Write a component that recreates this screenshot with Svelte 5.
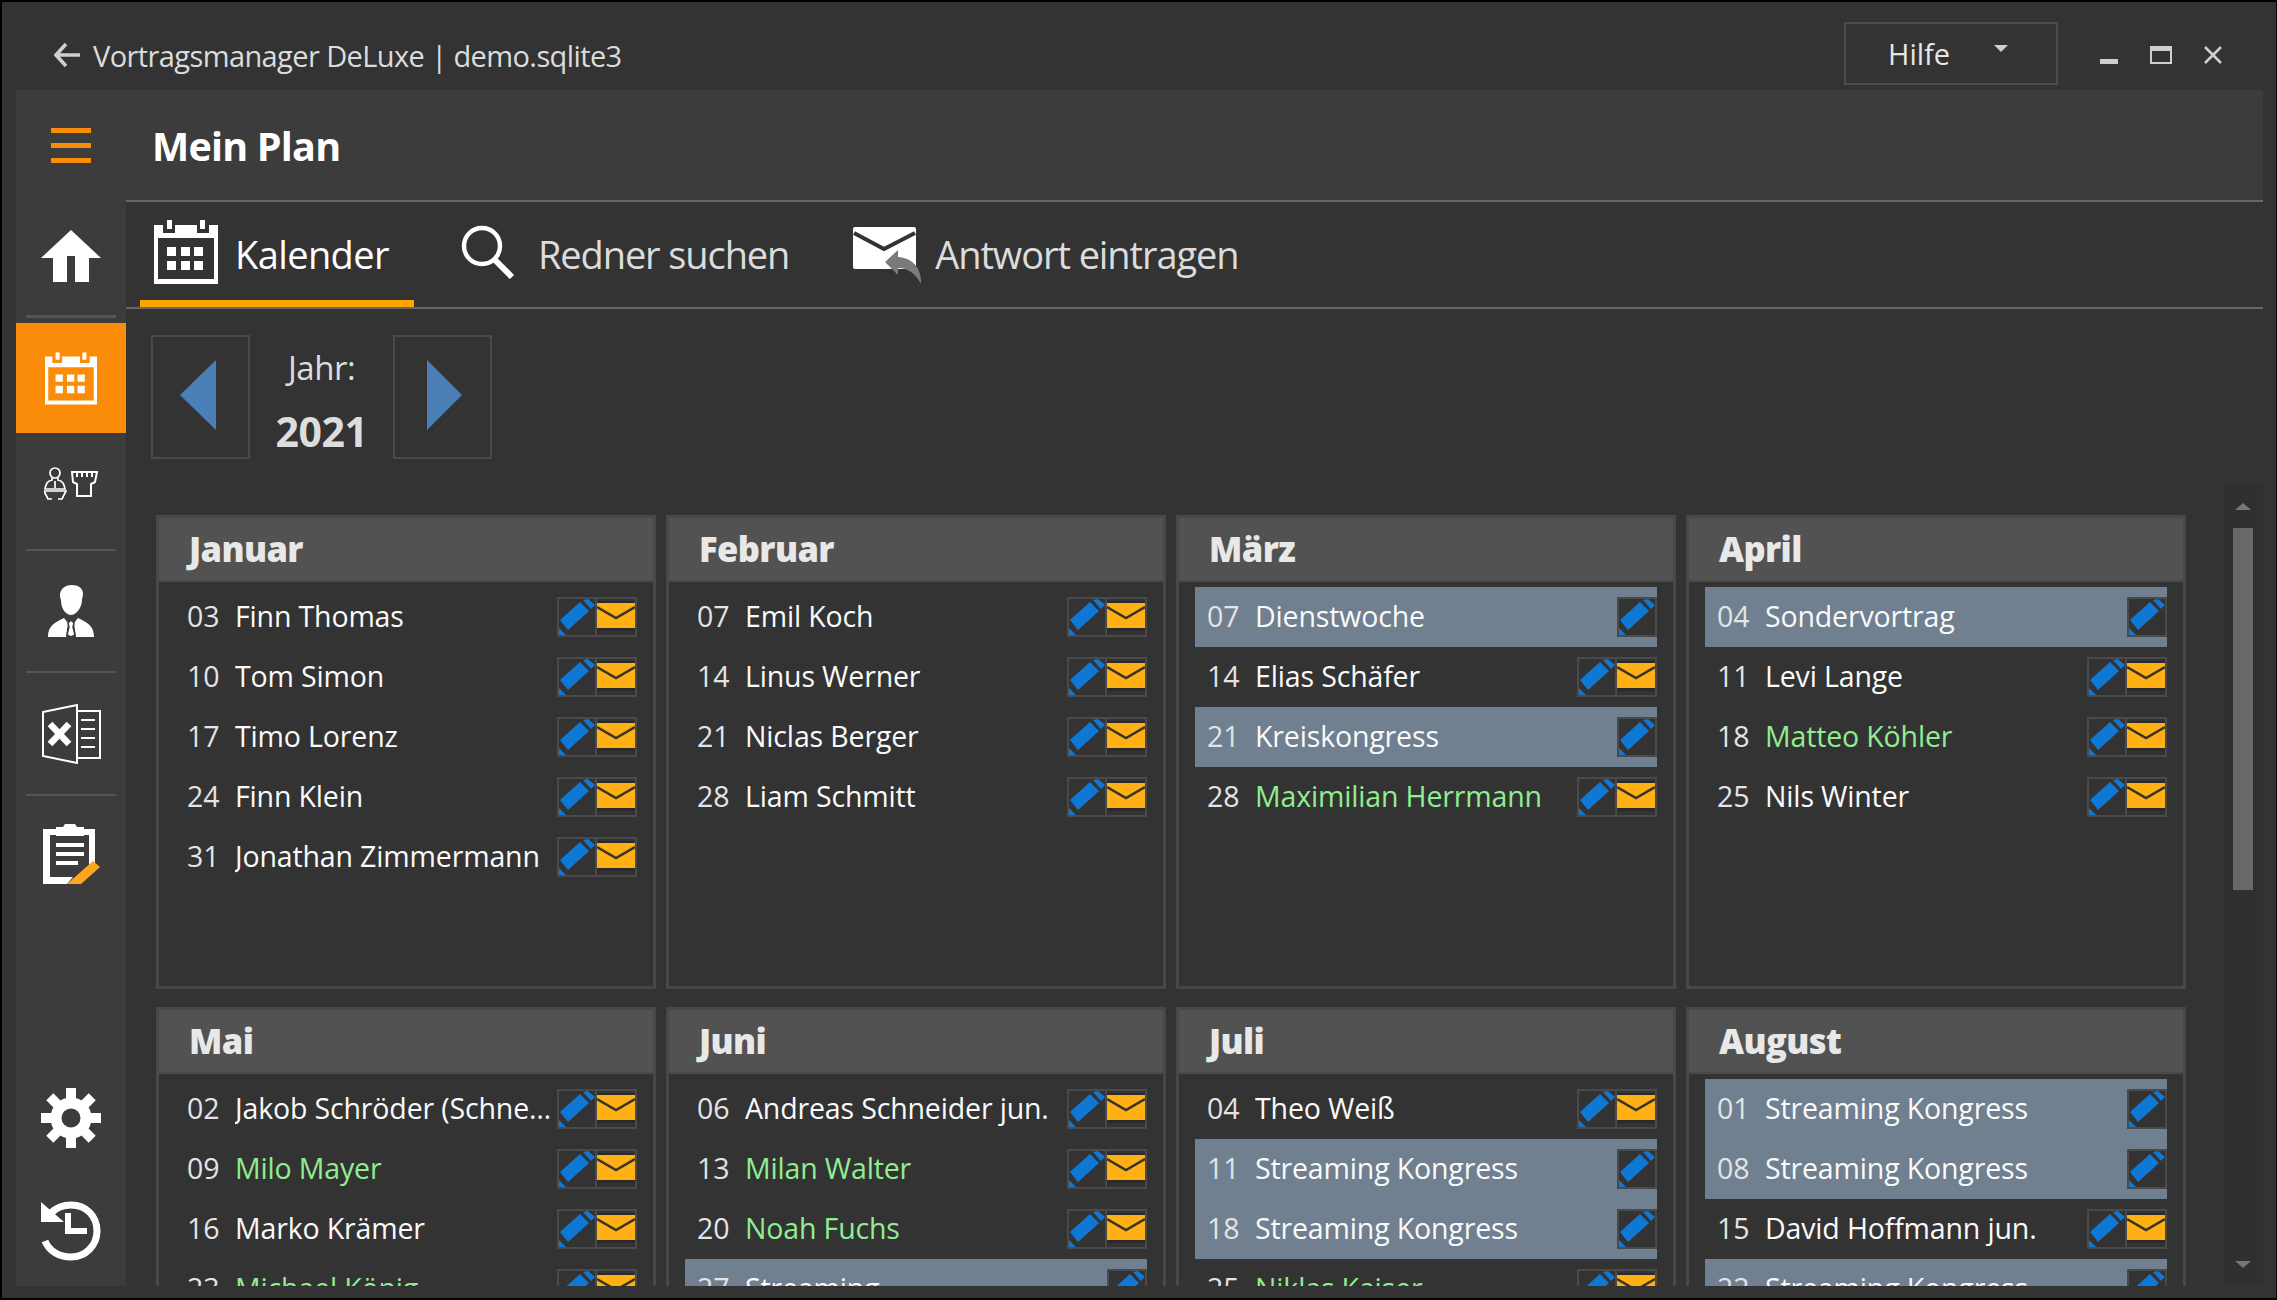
<script>
  const months = [
    { name: "Januar", rows: [
      { d: "03", t: "Finn Thomas" }, { d: "10", t: "Tom Simon" }, { d: "17", t: "Timo Lorenz" },
      { d: "24", t: "Finn Klein" }, { d: "31", t: "Jonathan Zimmermann" } ] },
    { name: "Februar", rows: [
      { d: "07", t: "Emil Koch" }, { d: "14", t: "Linus Werner" }, { d: "21", t: "Niclas Berger" },
      { d: "28", t: "Liam Schmitt" } ] },
    { name: "März", rows: [
      { d: "07", t: "Dienstwoche", event: true }, { d: "14", t: "Elias Schäfer" },
      { d: "21", t: "Kreiskongress", event: true }, { d: "28", t: "Maximilian Herrmann", guest: true } ] },
    { name: "April", rows: [
      { d: "04", t: "Sondervortrag", event: true }, { d: "11", t: "Levi Lange" },
      { d: "18", t: "Matteo Köhler", guest: true }, { d: "25", t: "Nils Winter" } ] },
    { name: "Mai", rows: [
      { d: "02", t: "Jakob Schröder (Schneider)" }, { d: "09", t: "Milo Mayer", guest: true },
      { d: "16", t: "Marko Krämer" }, { d: "23", t: "Michael König", guest: true } ] },
    { name: "Juni", rows: [
      { d: "06", t: "Andreas Schneider jun." }, { d: "13", t: "Milan Walter", guest: true },
      { d: "20", t: "Noah Fuchs", guest: true }, { d: "27", t: "Streaming", event: true } ] },
    { name: "Juli", rows: [
      { d: "04", t: "Theo Weiß" }, { d: "11", t: "Streaming Kongress", event: true },
      { d: "18", t: "Streaming Kongress", event: true }, { d: "25", t: "Niklas Kaiser", guest: true } ] },
    { name: "August", rows: [
      { d: "01", t: "Streaming Kongress", event: true }, { d: "08", t: "Streaming Kongress", event: true },
      { d: "15", t: "David Hoffmann jun." }, { d: "22", t: "Streaming Kongress", event: true } ] }
  ];

  const gearTeeth = [0, 45, 90, 135, 180, 225, 270, 315];
</script>

{#snippet calendar()}
  <path
    fill="currentColor"
    fill-rule="evenodd"
    d="M0 5H64V64H0ZM4 18H60V59H4ZM9 5H21V13H9ZM43 5H55V13H43ZM13 0H18V9H13ZM46 0H51V9H46ZM13 27H22V36H13ZM27 27H36V36H27ZM40 27H49V36H40ZM13 41H22V50H13ZM27 41H36V50H27ZM40 41H49V50H40Z"
  />
{/snippet}

{#snippet pencil()}
  <svg class="pen" viewBox="0 0 36 36">
    <path fill="#0f78d4" d="M1 21 21 3 30 12 9 31ZM24 1 29 0 36 6 32 10ZM0 29 7 36H0Z" />
  </svg>
{/snippet}

{#snippet mail()}
  <svg class="mail" viewBox="0 0 38 36">
    <rect x="0" y="2" width="38" height="2" fill="#2a2a2a" />
    <rect x="0" y="4" width="38" height="25" fill="#ffb014" />
    <rect x="0" y="29" width="38" height="3" fill="#2a2a2a" />
    <path d="M0 8 19 19 38 8" fill="none" stroke="#3a3226" stroke-width="2.500" />
  </svg>
{/snippet}

<div class="window">
  <header class="titlebar">
    <svg class="back" viewBox="0 0 26 26">
      <path d="M12 2 2 13 12 24M2 13H26" fill="none" stroke="#d0d0d0" stroke-width="3.500" />
    </svg>
    <span class="apptitle">Vortragsmanager DeLuxe | demo.sqlite3</span>
    <button class="help">
      <span>Hilfe</span>
      <i class="caret"></i>
    </button>
    <div class="winbtns">
      <span class="min"></span>
      <span class="max"></span>
      <svg class="close" viewBox="0 0 18 18">
        <path d="M1 1 17 17M17 1 1 17" stroke="#cfcfcf" stroke-width="2.500" />
      </svg>
    </div>
  </header>

  <div class="shell">
    <nav class="sidebar">
      <div class="burger"><span></span><span></span><span></span></div>

      <div class="item home">
        <svg class="i-home" viewBox="0 0 60 52">
          <path fill="#fff" d="M30 0 60 28H48V52H34V26H26V52H12V28H0Z" />
        </svg>
      </div>
      <div class="rule thick"></div>
      <div class="item active">
        <svg class="i-cal" viewBox="0 0 64 64">{@render calendar()}</svg>
      </div>
      <div class="item users">
        <svg class="i-users" viewBox="0 0 55 34" fill="none" stroke="#fff" stroke-width="1.700">
          <circle cx="11" cy="7" r="5" />
          <path d="M8 12V14C3 15 2 18 1 23H21C20 18 19 15 14 14V12M11 15V22" />
          <path d="M0 25H22L18 33H14M0 25 4 33H8" />
          <path d="M28 6H53L51 16 47 18V30H33V18L29 16ZM33 6V11M38 6V11M43 6V11M48 6V11" stroke-width="2" />
        </svg>
      </div>
      <div class="rule"></div>
      <div class="item person">
        <svg class="i-person" viewBox="0 0 46 52">
          <path fill="#fff" d="M12 9C13 3 18 0 24 0 30 0 35 3 35 9 35 11 34 13 34 15 34 19 32 24 29 27 27 29 25 30 23 30 21 30 19 29 17 27 14 24 13 19 13 15 12 13 12 11 12 9Z" />
          <path fill="#fff" d="M0 52C0 41 6 38 16 33L20 38 18 52H28L26 38 30 33C40 38 46 41 46 52Z" />
          <path d="M20 38 23 35 26 38 25 42 27 50 23 52 19 50 21 42Z" fill="#fff" stroke="#3c3c3c" stroke-width="1.500" />
        </svg>
      </div>
      <div class="rule"></div>
      <div class="item excel">
        <svg class="i-excel" viewBox="0 0 59 60">
          <path d="M1 8 35 1V59L1 52Z" fill="none" stroke="#fff" stroke-width="2" />
          <path d="M35 7H58V54H35M39 16H53M39 25H53M39 34H53M39 43H53" fill="none" stroke="#fff" stroke-width="2" />
          <path d="M8 20 27 40M27 20 8 40" stroke="#fff" stroke-width="6.500" />
        </svg>
      </div>
      <div class="rule"></div>
      <div class="item clip">
        <svg class="i-clip" viewBox="0 0 57 60">
          <path fill="#fff" d="M0 5H52V42H46V11H7V53H30L24 60H0Z" />
          <path fill="#fff" d="M13 3H20L22 0H32L34 3H41V12H13Z" />
          <path d="M13 21H41M13 30H41M13 39H35" stroke="#fff" stroke-width="4" />
          <path fill="#ffa51e" d="M24 60 50 37 57 43 38 60Z" />
        </svg>
      </div>
      <div class="spacer"></div>
      <div class="item gear">
        <svg class="i-gear" viewBox="0 0 60 62">
          {#each gearTeeth as angle}
            <rect x="25" y="1" width="10" height="14" fill="#fff" transform="rotate({angle} 30 31)" />
          {/each}
          <circle cx="30" cy="31" r="15" fill="none" stroke="#fff" stroke-width="11" />
        </svg>
      </div>
      <div class="item history">
        <svg class="i-hist" viewBox="0 0 60 61">
          <path d="M4 41C8 51 18 57 30 57 45 57 56 45 56 31 56 16 45 5 30 5 22 5 15 8 10 13" fill="none" stroke="#fff" stroke-width="7" />
          <path fill="#fff" d="M0 2 23 22H0Z" />
          <path d="M27 13V31H46" fill="none" stroke="#fff" stroke-width="6" />
        </svg>
      </div>
    </nav>

    <main class="main">
      <div class="pagehead"><h1>Mein Plan</h1></div>

      <div class="tabs">
        <div class="tab current">
          <svg class="t-cal" viewBox="0 0 64 64">{@render calendar()}</svg>
          <span>Kalender</span>
        </div>
        <div class="tab">
          <svg class="t-search" viewBox="0 0 54 54">
            <circle cx="21" cy="21" r="18" fill="none" stroke="#fff" stroke-width="4.500" />
            <path d="M33 34 51 52" stroke="#fff" stroke-width="6" />
          </svg>
          <span>Redner suchen</span>
        </div>
        <div class="tab">
          <svg class="t-mail" viewBox="0 0 70 58">
            <rect width="63" height="42" rx="2" fill="#fff" />
            <path d="M1 6 31 22 62 6" fill="none" stroke="#333" stroke-width="4" />
            <path fill="#7a7a7a" d="M32 35 45 23V30C60 31 69 42 68 57 63 47 55 41 45 41V48Z" />
          </svg>
          <span>Antwort eintragen</span>
        </div>
      </div>

      <div class="yearnav">
        <button class="arrow" aria-label="Vorheriges Jahr"><i class="tri left"></i></button>
        <div class="year">
          <span class="lbl">Jahr:</span>
          <strong>2021</strong>
        </div>
        <button class="arrow" aria-label="Nächstes Jahr"><i class="tri right"></i></button>
      </div>

      <div class="content">
        <div class="months">
          {#each months as m}
            <section class="card">
              <h2>{m.name}</h2>
              <div class="rows">
                {#each m.rows as r}
                  <div class="row" class:event={r.event} class:guest={r.guest}>
                    <span class="day">{r.d}</span>
                    <span class="who">{r.t}</span>
                    <div class="acts">
                      <span class="ico">{@render pencil()}</span>
                      {#if !r.event}
                        <span class="ico second">{@render mail()}</span>
                      {/if}
                    </div>
                  </div>
                {/each}
              </div>
            </section>
          {/each}
        </div>
        <div class="scrollbar">
          <i class="up"></i>
          <div class="thumb"></div>
          <i class="down"></i>
        </div>
      </div>
    </main>
  </div>
</div>

<style>
  :global(body) {
    margin: 0;
    background: #000;
  }

  .window {
    box-sizing: border-box;
    width: 2274px;
    height: 1296px;
    margin-top: 2px;
    margin-left: 2px;
    background: #333;
    display: flex;
    flex-direction: column;
    font-family: "Open Sans", "Noto Sans", sans-serif;
    color: #f2f2f2;
    overflow: hidden;
  }

  /* title bar */
  .titlebar {
    height: 88px;
    display: flex;
    align-items: center;
    flex: none;
    padding-left: 52px;
  }
  .back {
    width: 26px;
    height: 26px;
    margin-right: 13px;
    margin-top: 18px;
  }
  .apptitle {
    font-size: 29px;
    color: #dcdcdc;
    letter-spacing: -0.6px;
    margin-top: 18px;
  }
  .help {
    margin-left: auto;
    margin-top: 14px;
    width: 214px;
    height: 63px;
    box-sizing: border-box;
    border: 2px solid #4c4c4c;
    background: transparent;
    color: #e6e6e6;
    font: inherit;
    font-size: 29px;
    display: flex;
    align-items: center;
    padding: 0 0 0 42px;
  }
  .caret {
    margin-left: 44px;
    margin-top: -10px;
    border-left: 7px solid transparent;
    border-right: 7px solid transparent;
    border-top: 7px solid #cfcfcf;
  }
  .winbtns {
    display: flex;
    align-items: center;
    gap: 32px;
    margin-left: 42px;
    margin-right: 54px;
    margin-top: 17px;
  }
  .min {
    width: 18px;
    height: 5px;
    background: #cfcfcf;
    margin-top: 14px;
  }
  .max {
    box-sizing: border-box;
    width: 22px;
    height: 18px;
    border: 2px solid #cfcfcf;
    border-top-width: 5px;
  }
  .close {
    width: 18px;
    height: 18px;
  }

  .shell {
    flex: none;
    height: 1196px;
    margin: 0 13px 0 14px;
    display: flex;
    overflow: hidden;
  }

  /* left rail */
  .sidebar {
    width: 110px;
    flex: none;
    background: #3c3c3c;
    display: flex;
    flex-direction: column;
  }
  .burger {
    height: 110px;
    flex: none;
    display: flex;
    flex-direction: column;
    align-items: center;
    gap: 10px;
    padding-top: 38px;
    box-sizing: border-box;
  }
  .burger span {
    width: 40px;
    height: 5px;
    background: #fb8c09;
  }
  .item {
    flex: none;
    display: flex;
    align-items: center;
    justify-content: center;
  }
  .home { height: 111px; margin-bottom: 4px; }
  .active { height: 110px; background: #fb8c09; color: #fff; margin-top: 5px; }
  .users { height: 100px; margin-bottom: 16px; }
  .person { height: 120px; }
  .excel { height: 121px; }
  .clip { height: 116px; }
  .gear { height: 112px; }
  .history { height: 112px; }
  .spacer { flex: 1; }
  .rule {
    flex: none;
    height: 2px;
    margin: 0 10px;
    background: #555;
  }
  .rule.thick { height: 3px; }
  .i-home { width: 60px; height: 52px; }
  .i-cal { width: 52px; height: 53px; }
  .i-users { width: 55px; height: 34px; }
  .i-person { width: 46px; height: 52px; }
  .i-excel { width: 59px; height: 60px; }
  .i-clip { width: 57px; height: 60px; }
  .i-gear { width: 60px; height: 62px; }
  .i-hist { width: 60px; height: 61px; }

  /* main column */
  .main {
    flex: 1;
    min-width: 0;
    display: flex;
    flex-direction: column;
  }
  .pagehead {
    height: 110px;
    flex: none;
    box-sizing: content-box;
    background: #3c3c3c;
    border-bottom: 2px solid #666;
    display: flex;
    align-items: center;
  }
  h1 {
    margin: 0 0 0 26px;
    padding-top: 2px;
    font-size: 39.500px;
    font-weight: 700;
    color: #fff;
    letter-spacing: -0.8px;
  }
  .tabs {
    height: 105px;
    flex: none;
    border-bottom: 2px solid #666;
    display: flex;
    padding-left: 14px;
    gap: 33px;
  }
  .tab {
    display: flex;
    align-items: center;
    padding: 0 17px 0 14px;
    font-size: 38px;
    color: #dcdcdc;
    letter-spacing: -1.1px;
  }
  .tab span { margin-bottom: 2px; }
  .tab.current {
    color: #fff;
    letter-spacing: -0.6px;
    padding-right: 25px;
    box-shadow: inset 0 -7px 0 #ffa500;
  }
  .t-cal { width: 64px; height: 64px; color: #fff; margin-right: 17px; margin-bottom: 6px; }
  .t-search { width: 54px; height: 54px; margin-right: 23px; margin-bottom: 6px; }
  .t-mail { width: 70px; height: 58px; margin-right: 12px; margin-bottom: -2px; }

  .yearnav {
    flex: none;
    display: flex;
    margin: 26px 0 0 25px;
    height: 124px;
  }
  .arrow {
    width: 99px;
    height: 124px;
    box-sizing: border-box;
    border: 2px solid #4a4a4a;
    background: transparent;
    padding: 0;
    display: flex;
    align-items: center;
    justify-content: center;
  }
  .tri {
    display: block;
    border-top: 35px solid transparent;
    border-bottom: 35px solid transparent;
    margin-bottom: 5px;
  }
  .tri.left { border-right: 36px solid #4a7fb8; margin-right: 1px; margin-left: -4px; }
  .tri.right { border-left: 35px solid #4a7fb8; margin-left: 4px; }
  .year {
    width: 143px;
    display: flex;
    flex-direction: column;
    align-items: center;
    color: #ddd;
  }
  .lbl {
    font-size: 33px;
    line-height: 40px;
    margin-top: 13px;
    letter-spacing: -0.5px;
  }
  .year strong {
    font-size: 41px;
    line-height: 50px;
    margin-top: 18px;
    letter-spacing: -0.5px;
  }

  /* month cards */
  .content {
    flex: 1;
    min-height: 0;
    display: flex;
    margin-top: 26px;
    overflow: hidden;
  }
  .months {
    width: 2030px;
    margin-left: 30px;
    padding-top: 30px;
    flex: none;
    display: grid;
    grid-template-columns: repeat(4, 1fr);
    grid-auto-rows: 474px;
    gap: 18px 10px;
  }
  .card {
    box-sizing: border-box;
    border: 3px solid #484848;
    min-width: 0;
  }
  h2 {
    margin: 0;
    height: 64px;
    box-sizing: border-box;
    background: #525252;
    border-bottom: 2px solid #4a4a4a;
    padding-left: 30px;
    font-size: 34.500px;
    line-height: 62px;
    font-weight: 800;
    color: #e8e8e8;
    letter-spacing: -0.6px;
  }
  .rows {
    padding: 5px 16px 0;
  }
  .row {
    height: 60px;
    display: flex;
    align-items: center;
    padding-left: 12px;
    font-size: 28.500px;
    letter-spacing: -0.15px;
  }
  .row.event { background: #708090; }
  .row.guest .who { color: #90ee90; }
  .day {
    width: 48px;
    flex: none;
    color: #e4e4e4;
    padding-bottom: 3px;
  }
  .who {
    flex: 1;
    min-width: 0;
    white-space: nowrap;
    overflow: hidden;
    text-overflow: ellipsis;
    color: #fafafa;
    padding-bottom: 3px;
  }
  .acts {
    display: flex;
    flex: none;
  }
  .ico {
    width: 40px;
    height: 40px;
    box-sizing: border-box;
    border: 2px solid #4a4a4a;
    background: #333;
    display: block;
  }
  .ico.second { border-left-width: 0; }
  .ico :global(svg) { display: block; width: 36px; height: 36px; }
  .ico.second :global(svg) { width: 38px; }

  .scrollbar {
    width: 40px;
    margin-left: 37px;
    flex: none;
    background: #303030;
    display: flex;
    flex-direction: column;
    align-items: center;
    position: relative;
  }
  .up, .down {
    position: absolute;
    border-left: 8px solid transparent;
    border-right: 8px solid transparent;
  }
  .up { top: 18px; border-bottom: 7px solid #777; }
  .down { bottom: 18px; border-top: 7px solid #777; }
  .thumb {
    width: 20px;
    height: 362px;
    margin-top: 43px;
    background: #686868;
  }
</style>
